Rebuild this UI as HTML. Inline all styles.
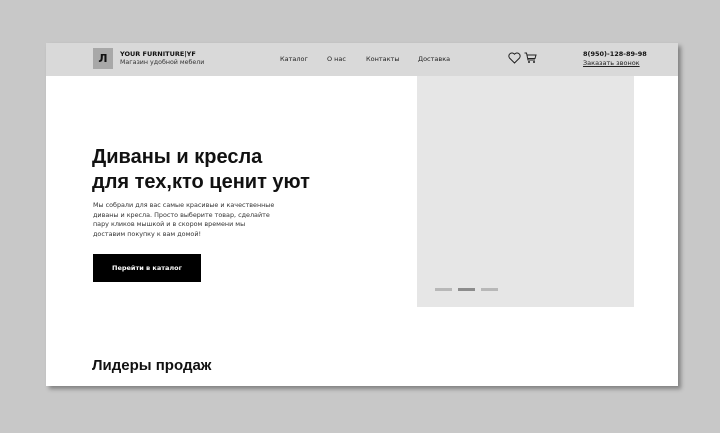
<!DOCTYPE html>
<html><head><meta charset="utf-8"><style>
*{margin:0;padding:0;box-sizing:border-box}
body{width:720px;height:433px;background:#c8c8c8;position:relative;overflow:hidden;font-family:"DejaVu Sans","Liberation Sans",sans-serif;color:#111}
.card{position:absolute;left:46px;top:43px;width:632px;height:343px;background:#fff;box-shadow:3px 3px 4px rgba(0,0,0,.35)}
.hdr{position:absolute;left:0;top:0;width:632px;height:33px;background:#d9d9d9}
.abs{position:absolute;white-space:nowrap}
.logo{left:47px;top:5px;width:20px;height:21px;background:#a8a8a8;font-weight:bold;font-size:11px;text-align:center;line-height:21px;color:#111}
.nav{font-size:6.5px;top:12px;color:#222}
.slider{left:371px;top:33px;width:217px;height:231px;background:#e6e6e6}
.dot{position:absolute;top:245px;width:17px;height:3px;background:#b8b8b8}
</style></head><body>
<div class="card">
<div class="hdr">
<div class="abs logo">Л</div>
<div class="abs" style="left:74px;top:7px;font-size:6.5px;font-weight:bold">YOUR FURNITURE|YF</div>
<div class="abs" style="left:74px;top:16px;font-size:6.3px;color:#333">Магазин удобной мебели</div>
<div class="abs nav" style="left:234px">Каталог</div>
<div class="abs nav" style="left:281px">О нас</div>
<div class="abs nav" style="left:320px">Контакты</div>
<div class="abs nav" style="left:372px">Доставка</div>
<svg class="abs" style="left:462px;top:9px" width="13" height="12" viewBox="0 0 13 12"><path d="M6.5 11 L1.5 6 A2.8 2.8 0 0 1 6.5 2.2 A2.8 2.8 0 0 1 11.5 6 Z" fill="none" stroke="#222" stroke-width="1"/></svg>
<svg class="abs" style="left:478px;top:9px" width="13" height="12" viewBox="0 0 13 12"><path d="M0.5 1 H2.5 L4 8 H11 M3 3 H12 L11 6.5 H3.7" fill="none" stroke="#222" stroke-width="1"/><circle cx="5" cy="10" r="1" fill="#222"/><circle cx="10" cy="10" r="1" fill="#222"/></svg>
<div class="abs" style="left:537px;top:7px;font-size:6.5px;font-weight:bold">8(950)-128-89-98</div>
<div class="abs" style="left:537px;top:16px;font-size:6.5px;text-decoration:underline;color:#222">Заказать звонок</div>
</div>
<div class="abs slider"></div>
<div class="dot" style="left:389px"></div>
<div class="dot" style="left:412px;background:#8c8c8c"></div>
<div class="dot" style="left:435px"></div>
<div class="abs" style="left:46px;top:102px;font-family:'Liberation Sans',sans-serif;font-size:20px;font-weight:bold;line-height:25px">Диваны и кресла<br>для тех,кто ценит уют</div>
<div class="abs" style="left:47px;top:158px;font-size:6.4px;line-height:9.5px;color:#333">Мы собрали для вас самые красивые и качественные<br>диваны и кресла. Просто выберите товар, сделайте<br>пару кликов мышкой и в скором времени мы<br>доставим покупку к вам домой!</div>
<div class="abs" style="left:47px;top:211px;width:108px;height:28px;background:#000;color:#fff;font-size:6.5px;font-weight:bold;text-align:center;line-height:28px">Перейти в каталог</div>
<div class="abs" style="left:46px;top:314px;font-family:'Liberation Sans',sans-serif;font-size:15px;font-weight:bold">Лидеры продаж</div>
</div>
</body></html>
